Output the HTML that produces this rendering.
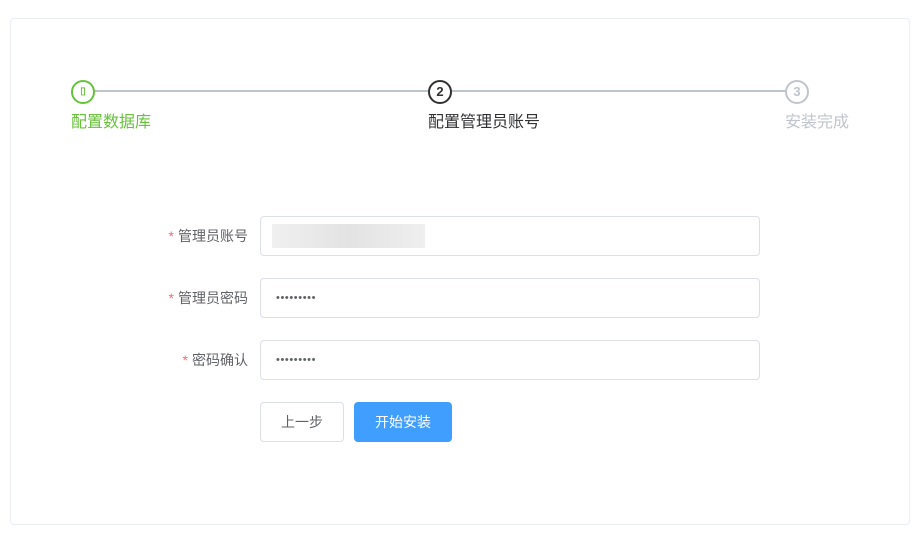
<!DOCTYPE html>
<html><head><meta charset="utf-8"><style>
body{margin:0;width:923px;height:534px;background:#fff;font-family:"Liberation Sans","Noto Sans CJK SC",sans-serif;position:relative;overflow:hidden}
.card{position:absolute;left:10px;top:18px;width:898px;height:505px;border:1px solid #ebeef5;border-radius:4px}
.line{position:absolute;top:90px;height:2px;background:#c0c4cc}
.c{position:absolute;top:80px;width:20px;height:20px;border:2px solid;border-radius:50%;box-sizing:content-box;text-align:center;line-height:20px;font-size:13px;font-weight:bold;background:#fff}
.t{position:absolute;top:112px;font-size:16px;line-height:22px}
.lab{position:absolute;right:675px;font-size:14px;color:#606266;line-height:40px}
.lab i{color:#f56c6c;font-style:normal;margin-right:4px}
.in{position:absolute;left:260px;height:38px;border:1px solid #dcdfe6;border-radius:4px;font-size:11px;color:#606266;line-height:38px;padding-left:15px;box-sizing:content-box;width:483px;letter-spacing:0.6px}
.btn{position:absolute;top:402px;height:38px;border-radius:4px;font-size:14px;line-height:38px;text-align:center}
</style></head><body>
<div class="card"></div>
<div class="line" style="left:94px;width:335px"></div>
<div class="line" style="left:451px;width:335px"></div>
<div class="c" style="left:71px;border-color:#67c23a;color:#67c23a;font-size:10px">▯</div>
<div class="c" style="left:428px;border-color:#303133;color:#303133">2</div>
<div class="c" style="left:785px;border-color:#c0c4cc;color:#c0c4cc">3</div>
<div class="t" style="left:71px;color:#67c23a">配置数据库</div>
<div class="t" style="left:428px;color:#303133">配置管理员账号</div>
<div class="t" style="left:785px;color:#c0c4cc">安装完成</div>
<div class="lab" style="top:216px"><i>*</i>管理员账号</div>
<div class="lab" style="top:278px"><i>*</i>管理员密码</div>
<div class="lab" style="top:340px"><i>*</i>密码确认</div>
<div class="in" style="top:216px"><div style="position:absolute;left:11px;top:7px;width:153px;height:24px;background:linear-gradient(90deg,#f0f0f0,#e3e3e3,#efefef)"></div></div>
<div class="in" style="top:278px">•••••••••</div>
<div class="in" style="top:340px">•••••••••</div>
<div class="btn" style="left:260px;width:82px;border:1px solid #dcdfe6;color:#606266">上一步</div>
<div class="btn" style="left:354px;width:98px;height:40px;line-height:40px;background:#409eff;color:#fff">开始安装</div>
</body></html>
